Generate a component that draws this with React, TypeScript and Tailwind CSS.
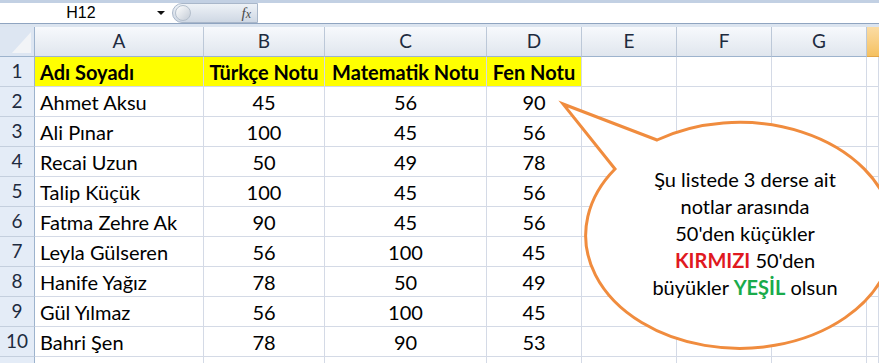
import React from "react";

const rows: [string, string, string, string][] = [
  ["Ahmet Aksu", "45", "56", "90"],
  ["Ali Pınar", "100", "45", "56"],
  ["Recai Uzun", "50", "49", "78"],
  ["Talip Küçük", "100", "45", "56"],
  ["Fatma Zehre Ak", "90", "45", "56"],
  ["Leyla Gülseren", "56", "100", "45"],
  ["Hanife Yağız", "78", "50", "49"],
  ["Gül Yılmaz", "56", "100", "45"],
  ["Bahri Şen", "78", "90", "53"],
];

const gridCols = "grid grid-cols-[35px_169px_121px_162px_95px_95px_95px_95px_1fr]";
const cell = "h-[30px] border-r border-b border-[#d4dae6] flex items-center whitespace-nowrap";
const rowHead =
  "h-[30px] border-r border-b border-r-[#9db3cd] border-b-[#c4cfde] bg-[#e4ecf7] flex items-center justify-center text-[19px] text-[#1e2b3f]";
const colHead =
  "h-[30px] border-r border-b border-r-[#bcc8d8] border-b-[#9db3cd] bg-gradient-to-b from-[#f7f9fc] to-[#e0e6ee] flex items-center justify-center text-[19px] text-[#1e2b3f]";

function Empties({ n }: { n: number }) {
  return (
    <>
      {Array.from({ length: n }).map((_, i) => (
        <div key={i} className={cell} />
      ))}
    </>
  );
}

export default function App() {
  return (
    <div
      className="relative w-[879px] h-[363px] overflow-hidden bg-white"
      style={{ fontFamily: "Lato, 'Noto Sans', sans-serif" }}
    >
      {/* formula bar */}
      <div className="h-[3px] bg-[#c2d0e3]" />
      <div className="h-[20px] flex bg-white">
        <div className="w-[172px] flex items-center relative">
          <span
            className="flex-1 text-center text-[16px] text-black pl-[6px]"
            style={{ fontFamily: "'Liberation Sans', Arial, sans-serif" }}
          >
            H12
          </span>
          <svg width="10" height="6" viewBox="0 0 10 6" className="mr-[6px]">
            <path d="M1 1 L9 1 L5 5 Z" fill="#111" />
          </svg>
        </div>
        <div className="w-[86px] h-[20px] rounded-l-full border border-[#a9b7ca] bg-gradient-to-b from-[#eef2f7] to-[#cfd8e4] flex items-center justify-between pl-[2px] pr-[6px]">
          <div className="w-[16px] h-[16px] rounded-full bg-gradient-to-br from-white to-[#c4ccd6] border border-[#b4bfcc]" />
          <span
            className="italic text-[15px] text-[#4a4a4a]"
            style={{ fontFamily: "'Liberation Serif', serif" }}
          >
            f<span className="text-[12px]">x</span>
          </span>
        </div>
        <div className="flex-1 bg-white" />
      </div>
      <div className="h-[1px] bg-[#8fa4c0]" />
      <div className="h-[3px] bg-[#dbe4ef]" />

      {/* grid */}
      <div className={gridCols}>
        {/* header row */}
        <div className="h-[30px] border-r border-b border-r-[#9db3cd] border-b-[#9db3cd] bg-[#dde6f2] relative">
          <svg width="35" height="30" className="absolute inset-0">
            <path d="M31 5 L31 26 L12 26 Z" fill="#f2f4f7" />
          </svg>
        </div>
        {["A", "B", "C", "D", "E", "F", "G"].map((l) => (
          <div key={l} className={colHead}>
            {l}
          </div>
        ))}
        <div className="h-[30px] border-b border-b-[#e2a64a] bg-gradient-to-b from-[#fbdca3] to-[#f5c160]" />

        {/* row 1 */}
        <div className={rowHead}>1</div>
        <div className={`${cell} bg-[#ffff00] font-bold text-[20px] pl-[5px]`}>Adı Soyadı</div>
        <div className={`${cell} bg-[#ffff00] font-bold text-[20px] justify-center`}>Türkçe Notu</div>
        <div className={`${cell} bg-[#ffff00] font-bold text-[20px] justify-center`}>Matematik Notu</div>
        <div className={`${cell} bg-[#ffff00] font-bold text-[20px] justify-center`}>Fen Notu</div>
        <Empties n={4} />

        {rows.map((r, i) => (
          <React.Fragment key={i}>
            <div className={rowHead}>{i + 2}</div>
            <div className={`${cell} text-[20px] pl-[5px] text-black`}>{r[0]}</div>
            <div className={`${cell} text-[20px] justify-center text-black`}>{r[1]}</div>
            <div className={`${cell} text-[20px] justify-center text-black`}>{r[2]}</div>
            <div className={`${cell} text-[20px] justify-center text-black`}>{r[3]}</div>
            <Empties n={4} />
          </React.Fragment>
        ))}
        <div className={rowHead} />
        <Empties n={8} />
      </div>

      {/* speech bubble */}
      <svg
        width="879"
        height="363"
        viewBox="0 0 879 363"
        className="absolute left-0 top-0 pointer-events-none"
      >
        <path
          d="M657 140 L563 104 L615 169 A154 113 0 1 0 657 140 Z"
          fill="#ffffff"
          stroke="#f08c3e"
          strokeWidth="3"
          strokeLinejoin="miter"
        />
      </svg>
      <div className="absolute left-[640px] top-[166px] w-[210px] text-center text-[20px] leading-[27px] text-black whitespace-nowrap">
        <div>Şu listede 3 derse ait</div>
        <div>notlar arasında</div>
        <div>50'den küçükler</div>
        <div>
          <span className="font-bold text-[#e0191f]">KIRMIZI</span> 50'den
        </div>
        <div>
          büyükler <span className="font-bold text-[#1aab4b]">YEŞİL</span> olsun
        </div>
      </div>
    </div>
  );
}
